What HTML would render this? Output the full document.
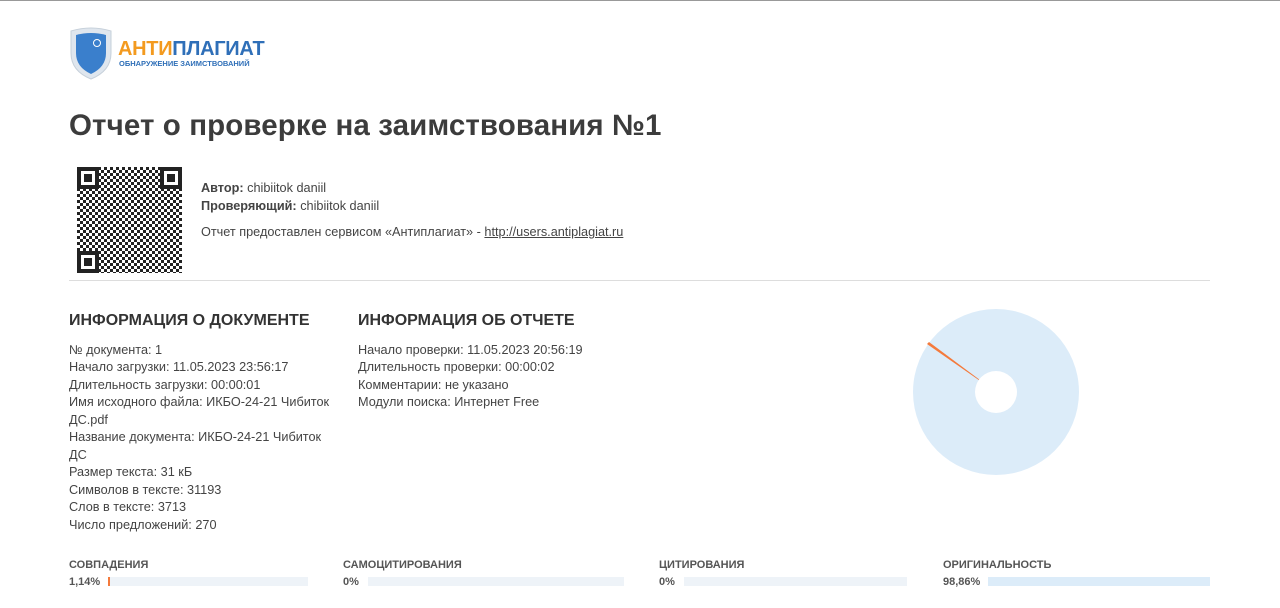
<!DOCTYPE html>
<html><head><meta charset="utf-8"><style>
body{margin:0;width:1280px;height:608px;background:#fff;font-family:"Liberation Sans",sans-serif;color:#333;position:relative;overflow:hidden;border-top:1px solid #999;box-sizing:border-box}
.a{position:absolute}
.t{font-size:12.7px;line-height:17.5px;color:#444}
h1{position:absolute;left:69px;top:108px;margin:0;font-size:29.5px;letter-spacing:0.1px;font-weight:bold;color:#3c3c3c}
h2{margin:0 0 12px;font-size:16px;font-weight:bold;color:#333}
.lab{font-size:11px;font-weight:bold;color:#555}
.bar{position:absolute;height:9px;background:#eef3f8}
.qr{background:
repeating-conic-gradient(#222 0 25%,#fff 0 50%) 0 0/6px 6px,#fff}
</style></head><body>
<svg class="a" style="left:68px;top:26px" width="46" height="54" viewBox="0 0 46 54"><path d="M3 4 Q23 -2 43 4 L43 26 Q43 44 23 52 Q3 44 3 26Z" fill="#dfe6ee" stroke="#c6d0da"/><path d="M8 8 Q23 4 38 8 L38 26 Q38 40 23 47 Q8 40 8 26Z" fill="#3a7fcc"/><circle cx="29" cy="16" r="3.5" fill="none" stroke="#fff" stroke-width="1"/></svg>
<div class="a" style="left:118px;top:37px;font-size:20px;font-weight:bold;letter-spacing:-0.3px"><span style="color:#f39a1f">АНТИ</span><span style="color:#2f6fb8">ПЛАГИАТ</span></div>
<div class="a" style="left:119px;top:58px;font-size:7.5px;font-weight:bold;color:#2f6fb8">ОБНАРУЖЕНИЕ ЗАИМСТВОВАНИЙ</div>
<h1>Отчет о проверке на заимствования №1</h1>
<div class="a qr" style="left:77px;top:166px;width:105px;height:106px"></div>
<div class="a" style="left:77px;top:166px;width:22px;height:22px;border:4px solid #222;background:#fff;box-sizing:border-box"><div style="margin:3px;width:8px;height:8px;background:#222"></div></div>
<div class="a" style="left:160px;top:166px;width:22px;height:22px;border:4px solid #222;background:#fff;box-sizing:border-box"><div style="margin:3px;width:8px;height:8px;background:#222"></div></div>
<div class="a" style="left:77px;top:250px;width:22px;height:22px;border:4px solid #222;background:#fff;box-sizing:border-box"><div style="margin:3px;width:8px;height:8px;background:#222"></div></div>
<div class="a t" style="left:201px;top:179px"><b>Автор:</b> chibiitok daniil<br><b>Проверяющий:</b> chibiitok daniil</div>
<div class="a t" style="left:201px;top:223px">Отчет предоставлен сервисом «Антиплагиат» - <u>http://users.antiplagiat.ru</u></div>
<div class="a" style="left:69px;top:279px;width:1141px;height:1px;background:#ddd"></div>
<div class="a t" style="left:69px;top:311px;width:262px"><h2 style="white-space:nowrap">ИНФОРМАЦИЯ О ДОКУМЕНТЕ</h2>№ документа: 1<br>Начало загрузки: 11.05.2023 23:56:17<br>Длительность загрузки: 00:00:01<br>Имя исходного файла: ИКБО-24-21 Чибиток ДС.pdf<br>Название документа: ИКБО-24-21 Чибиток ДС<br>Размер текста: 31 кБ<br>Символов в тексте: 31193<br>Слов в тексте: 3713<br>Число предложений: 270</div>
<div class="a t" style="left:358px;top:311px;width:300px"><h2>ИНФОРМАЦИЯ ОБ ОТЧЕТЕ</h2>Начало проверки: 11.05.2023 20:56:19<br>Длительность проверки: 00:00:02<br>Комментарии: не указано<br>Модули поиска: Интернет Free</div>
<svg class="a" style="left:913px;top:308px" width="166" height="166"><circle cx="83" cy="83" r="83" fill="#dcecf9"/><path d="M83 83 L14 35 L16 33Z" fill="#f47a3c"/><circle cx="83" cy="83" r="21" fill="#fff"/></svg>
<div class="a lab" style="left:69px;top:558px">СОВПАДЕНИЯ</div>
<div class="a lab" style="left:69px;top:575px">1,14%</div>
<div class="bar" style="left:108px;top:576px;width:200px"></div><div class="a" style="left:108px;top:576px;width:2px;height:9px;background:#f47a3c"></div>
<div class="a lab" style="left:343px;top:558px">САМОЦИТИРОВАНИЯ</div>
<div class="a lab" style="left:343px;top:575px">0%</div>
<div class="bar" style="left:368px;top:576px;width:256px"></div>
<div class="a lab" style="left:659px;top:558px">ЦИТИРОВАНИЯ</div>
<div class="a lab" style="left:659px;top:575px">0%</div>
<div class="bar" style="left:684px;top:576px;width:223px"></div>
<div class="a lab" style="left:943px;top:558px">ОРИГИНАЛЬНОСТЬ</div>
<div class="a lab" style="left:943px;top:575px">98,86%</div>
<div class="bar" style="left:988px;top:576px;width:222px;background:#dcecf9"></div>
</body></html>
